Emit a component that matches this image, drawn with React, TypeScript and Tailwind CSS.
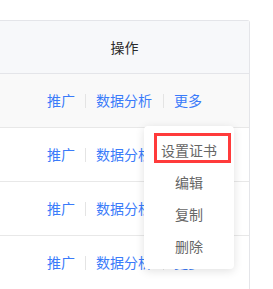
import React from "react";

const font = { fontFamily: '"Noto Sans CJK SC", "Noto Sans", sans-serif' };

function Row({ hover }: { hover?: boolean }) {
  return (
    <div
      className={`h-[54px] border-b border-[#e8e8e8] flex items-center justify-center text-[14px] text-[#3a7bfa] ${
        hover ? "bg-[#f9f9f9]" : "bg-white"
      }`}
    >
      <span>推广</span>
      <span className="mx-[10px] w-px h-[14px] bg-[#e4e4e4]" />
      <span>数据分析</span>
      <span className="ml-[11px] mr-[10px] w-px h-[14px] bg-[#e4e4e4]" />
      <span>更多</span>
    </div>
  );
}

export default function App() {
  return (
    <div className="relative w-[273px] h-[289px] bg-white overflow-hidden" style={font}>
      <div className="pt-[20px]">
        <div className="w-[250px] h-[300px] border border-l-0 border-[#e4e5e9] rounded-tr-[3px]">
          <div className="h-[53px] bg-[#f7f8fa] border-b border-[#e4e5e9] flex items-center justify-center text-[14px] text-[#2b2b2b] font-normal">
            操作
          </div>
          <Row hover />
          <Row />
          <Row />
          <Row />
        </div>
      </div>
      <div className="absolute left-[144px] top-[126px] w-[90px] h-[143px] bg-white rounded-[4px] shadow-[0_2px_10px_rgba(0,0,0,0.12)] py-[8px] text-[14px] text-[#666]">
        <div className="h-8 flex items-center justify-center">设置证书</div>
        <div className="h-8 flex items-center justify-center">编辑</div>
        <div className="h-8 flex items-center justify-center">复制</div>
        <div className="h-8 flex items-center justify-center">删除</div>
        <div className="absolute left-[10px] top-[7px] w-[77px] h-[30px] border-[3px] border-[#ff3b3b]" />
      </div>
    </div>
  );
}
